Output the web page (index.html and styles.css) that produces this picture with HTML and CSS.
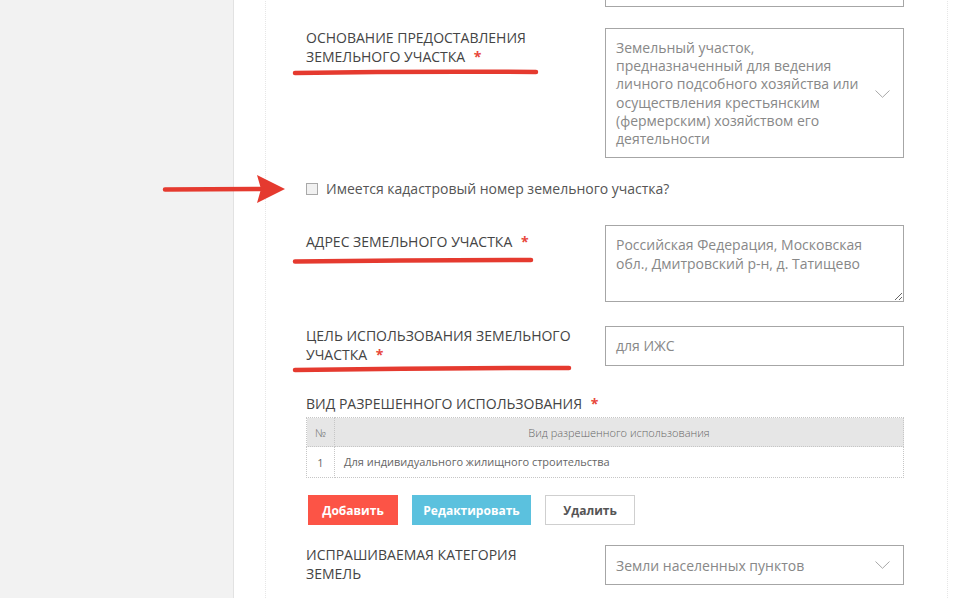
FILE: index.html
```html
<!DOCTYPE html>
<html lang="ru">
<head>
<meta charset="utf-8">
<title>Форма</title>
<link rel="stylesheet" href="styles.css">
</head>
<body>
  <aside class="sidebar"></aside>
  <main class="main">
    <div class="card">
      <div class="row row-top">
        <div class="label"></div>
        <div class="field field-short"></div>
      </div>

      <div class="row row-basis">
        <div class="label">ОСНОВАНИЕ ПРЕДОСТАВЛЕНИЯ<br>ЗЕМЕЛЬНОГО УЧАСТКА <span class="req">*</span></div>
        <div class="field select select-tall">
          <div class="select-text">Земельный участок,<br>предназначенный для ведения<br>личного подсобного хозяйства или<br>осуществления крестьянским<br>(фермерским) хозяйством его<br>деятельности</div>
          <svg class="chevron" width="15" height="8" viewBox="0 0 15 8"><path d="M0.5 0.5 L7.5 7.3 L14.5 0.5" fill="none" stroke="#a8a8a8" stroke-width="1"/></svg>
        </div>
      </div>

      <label class="check-row">
        <span class="checkbox"></span>
        <span class="check-text">Имеется кадастровый номер земельного участка?</span>
      </label>

      <div class="row row-address">
        <div class="label label-offset">АДРЕС ЗЕМЕЛЬНОГО УЧАСТКА <span class="req">*</span></div>
        <textarea class="field textarea">Российская Федерация, Московская обл., Дмитровский р-н, д. Татищево</textarea>
      </div>

      <div class="row row-purpose">
        <div class="label">ЦЕЛЬ ИСПОЛЬЗОВАНИЯ ЗЕМЕЛЬНОГО<br>УЧАСТКА <span class="req">*</span></div>
        <div class="field input">для ИЖС</div>
      </div>

      <div class="section-title">ВИД РАЗРЕШЕННОГО ИСПОЛЬЗОВАНИЯ <span class="req">*</span></div>
      <table class="grid">
        <thead>
          <tr><th class="col-num">№</th><th>Вид разрешенного использования</th></tr>
        </thead>
        <tbody>
          <tr><td class="col-num">1</td><td>Для индивидуального жилищного строительства</td></tr>
        </tbody>
      </table>

      <div class="buttons">
        <button class="btn btn-add">Добавить</button>
        <button class="btn btn-edit">Редактировать</button>
        <button class="btn btn-del">Удалить</button>
      </div>

      <div class="row row-category">
        <div class="label">ИСПРАШИВАЕМАЯ КАТЕГОРИЯ<br>ЗЕМЕЛЬ</div>
        <div class="field select select-short">
          <div class="select-text">Земли населенных пунктов</div>
          <svg class="chevron" width="15" height="8" viewBox="0 0 15 8"><path d="M0.5 0.5 L7.5 7.3 L14.5 0.5" fill="none" stroke="#a8a8a8" stroke-width="1"/></svg>
        </div>
      </div>
    </div>
  </main>

  <svg class="annotations" width="965" height="598" viewBox="0 0 965 598">
    <g stroke="#e53a2f" stroke-linecap="round" fill="none">
      <path d="M295 73 Q420 71 536 72" stroke-width="4.5"/>
      <path d="M295 261.5 Q410 260 531 260" stroke-width="4.5"/>
      <path d="M295 370 Q430 368 569 368" stroke-width="4.5"/>
      <path d="M165 189.5 L262 189" stroke-width="4.5"/>
    </g>
    <path d="M257 175 L285 189 L257 203 L261 189 Z" fill="#e53a2f"/>
  </svg>
</body>
</html>
```

FILE: styles.css
```css
* { box-sizing: border-box; }

html, body {
  margin: 0;
  padding: 0;
}

body {
  display: flex;
  height: 598px;
  overflow: hidden;
  background: #f2f2f2;
  font-family: "Open Sans", "Noto Sans", sans-serif;
  color: #444;
  position: relative;
}

.sidebar {
  flex: 0 0 233px;
}

.main {
  flex: 1;
  background: #fff;
  border-left: 1px solid #e2e2e2;
  padding-left: 31px;
}

.card {
  width: 683px;
  margin-top: -32px;
  padding: 0 43px 0 40px;
  border-left: 1px dotted #e6e6e6;
  border-right: 1px dotted #e6e6e6;
  min-height: 700px;
}

.row {
  display: grid;
  grid-template-columns: 299px 299px;
  align-items: start;
}

.label {
  font-size: 14px;
  line-height: 19px;
  color: #444;
}

.label-offset { padding-top: 7px; }

.req {
  color: #e8473b;
  font-weight: 700;
  margin-left: 5px;
}

.field {
  border: 1px solid #a6a6a6;
  background: #fff;
  font-family: "Open Sans", "Noto Sans", sans-serif;
  font-size: 14px;
  color: #888;
}

.field-short { height: 39px; }

.row-basis { margin-top: 21px; }
.row-address { margin-top: 27px; }
.row-purpose { margin-top: 24px; }
.row-category { margin-top: 20px; }

.select {
  display: flex;
  align-items: center;
  padding: 0 13px 0 10px;
}

.select-tall {
  height: 130px;
  line-height: 18.3px;
  padding-top: 1px;
}

.select-short {
  height: 40px;
}

.select-text { flex: 1; }

.chevron { flex: none; display: block; }

.check-row {
  display: flex;
  align-items: center;
  height: 19px;
  margin-top: 21px;
}

.checkbox {
  width: 12px;
  height: 12px;
  border: 1px solid #a9a9a9;
  background: #f1f1f1;
  margin-right: 8px;
  flex: none;
}

.check-text {
  font-size: 14px;
  color: #555;
  line-height: 19px;
}

.textarea {
  display: block;
  width: 299px;
  height: 77px;
  margin: 0;
  padding: 9px 10px;
  line-height: 19px;
  resize: vertical;
  outline: none;
}

.input {
  height: 40px;
  line-height: 38px;
  padding: 0 10px;
}

.section-title {
  margin-top: 28px;
  font-size: 14px;
  line-height: 19px;
  color: #444;
}

.grid {
  margin-top: 4px;
  width: 598px;
  border-collapse: collapse;
  font-size: 11px;
}

.grid th, .grid td {
  border: 1px dotted #c6c6c6;
}

.grid th {
  background: #e6e6e6;
  height: 29px;
  font-weight: 300;
  color: #666;
  text-align: center;
  padding: 0;
}

.grid td {
  height: 31px;
  color: #666;
  padding: 0 0 1px 9px;
}

.grid .col-num {
  width: 28px;
  text-align: center;
  padding: 0;
}

.buttons {
  display: flex;
  gap: 14px;
  margin-top: 17px;
  padding-left: 2px;
}

.btn {
  height: 30px;
  border: 0;
  margin: 0;
  padding: 0;
  font-family: "Open Sans", "Noto Sans", sans-serif;
  font-size: 12px;
  font-weight: 700;
  color: #fff;
}

.btn-add { width: 90px; background: #fc5446; }
.btn-edit { width: 119px; background: #5bc1de; }
.btn-del {
  width: 90px;
  background: #fff;
  border: 1px solid #cfcfcf;
  color: #555;
}

.annotations {
  position: absolute;
  left: 0;
  top: 0;
  pointer-events: none;
}
```
